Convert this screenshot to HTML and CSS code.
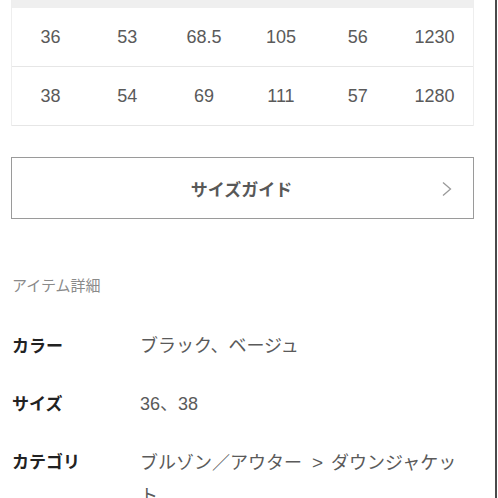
FILE: index.html
```html
<!DOCTYPE html>
<html lang="ja">
<head>
<meta charset="utf-8">
<link rel="stylesheet" href="styles.css">
</head>
<body>
<div class="frame">
  <div class="content">
    <div class="table">
      <div class="head"></div>
      <div class="row">
        <span>36</span><span>53</span><span>68.5</span><span>105</span><span>56</span><span>1230</span>
      </div>
      <div class="row">
        <span>38</span><span>54</span><span>69</span><span>111</span><span>57</span><span>1280</span>
      </div>
    </div>

    <div class="guide">
      <span class="guide-text">サイズガイド</span>
      <svg class="chev" width="12" height="16" viewBox="0 0 12 16"><path d="M2 1.5 L9.5 8 L2 14.5" fill="none" stroke="#9a9a9a" stroke-width="1.3"/></svg>
    </div>

    <div class="section-title">アイテム詳細</div>

    <div class="details">
      <div class="drow"><div class="label">カラー</div><div class="value">ブラック、ベージュ</div></div>
      <div class="drow"><div class="label">サイズ</div><div class="value">36、38</div></div>
      <div class="drow"><div class="label">カテゴリ</div><div class="value">ブルゾン／アウター<span class="sep">&gt;</span>ダウンジャケット</div></div>
    </div>
  </div>
</div>
</body>
</html>
```

FILE: styles.css
```css
html, body {
  margin: 0;
  padding: 0;
  background: #ffffff;
  height: 498px;
  overflow: hidden;
}
body {
  font-family: "Liberation Sans", "Noto Sans CJK JP", sans-serif;
}
.frame {
  width: 495px;
  height: 498px;
  border-right: 2px solid #4a4a4a;
  box-sizing: content-box;
}
.content {
  padding-left: 11px;
  width: 463px;
}
.table {
  border-left: 1px solid #eeeeee;
  border-right: 1px solid #eeeeee;
}
.head {
  height: 8px;
  background: #efefef;
}
.row {
  display: grid;
  grid-template-columns: repeat(6, 1fr);
  height: 58px;
  align-items: center;
  border-bottom: 1px solid #e6e6e6;
  font-size: 18px;
  color: #5a5a5a;
}
.row span {
  text-align: center;
}
.guide {
  margin-top: 31px;
  height: 60px;
  border: 1px solid #9a9a9a;
  display: flex;
  align-items: center;
  justify-content: center;
  position: relative;
}
.guide-text {
  font-size: 17px;
  font-weight: bold;
  color: #585858;
  margin-left: -2px;
}
.chev {
  position: absolute;
  right: 20px;
  top: 23px;
}
.section-title {
  margin-top: 57px;
  height: 20px;
  line-height: 20px;
  font-size: 15px;
  color: #8a8a8a;
  padding-left: 1px;
}
.details {
  margin-top: 21px;
}
.drow {
  display: flex;
  padding: 12.5px 0;
  line-height: 33px;
}
.label {
  width: 128px;
  flex: none;
  font-size: 17px;
  font-weight: bold;
  color: #222222;
  padding-left: 1px;
}
.value {
  font-size: 18px;
  color: #5a5a5a;
  width: 318px;
}
.sep {
  padding: 0 8px 0 10px;
  font-size: 19px;
}
```
